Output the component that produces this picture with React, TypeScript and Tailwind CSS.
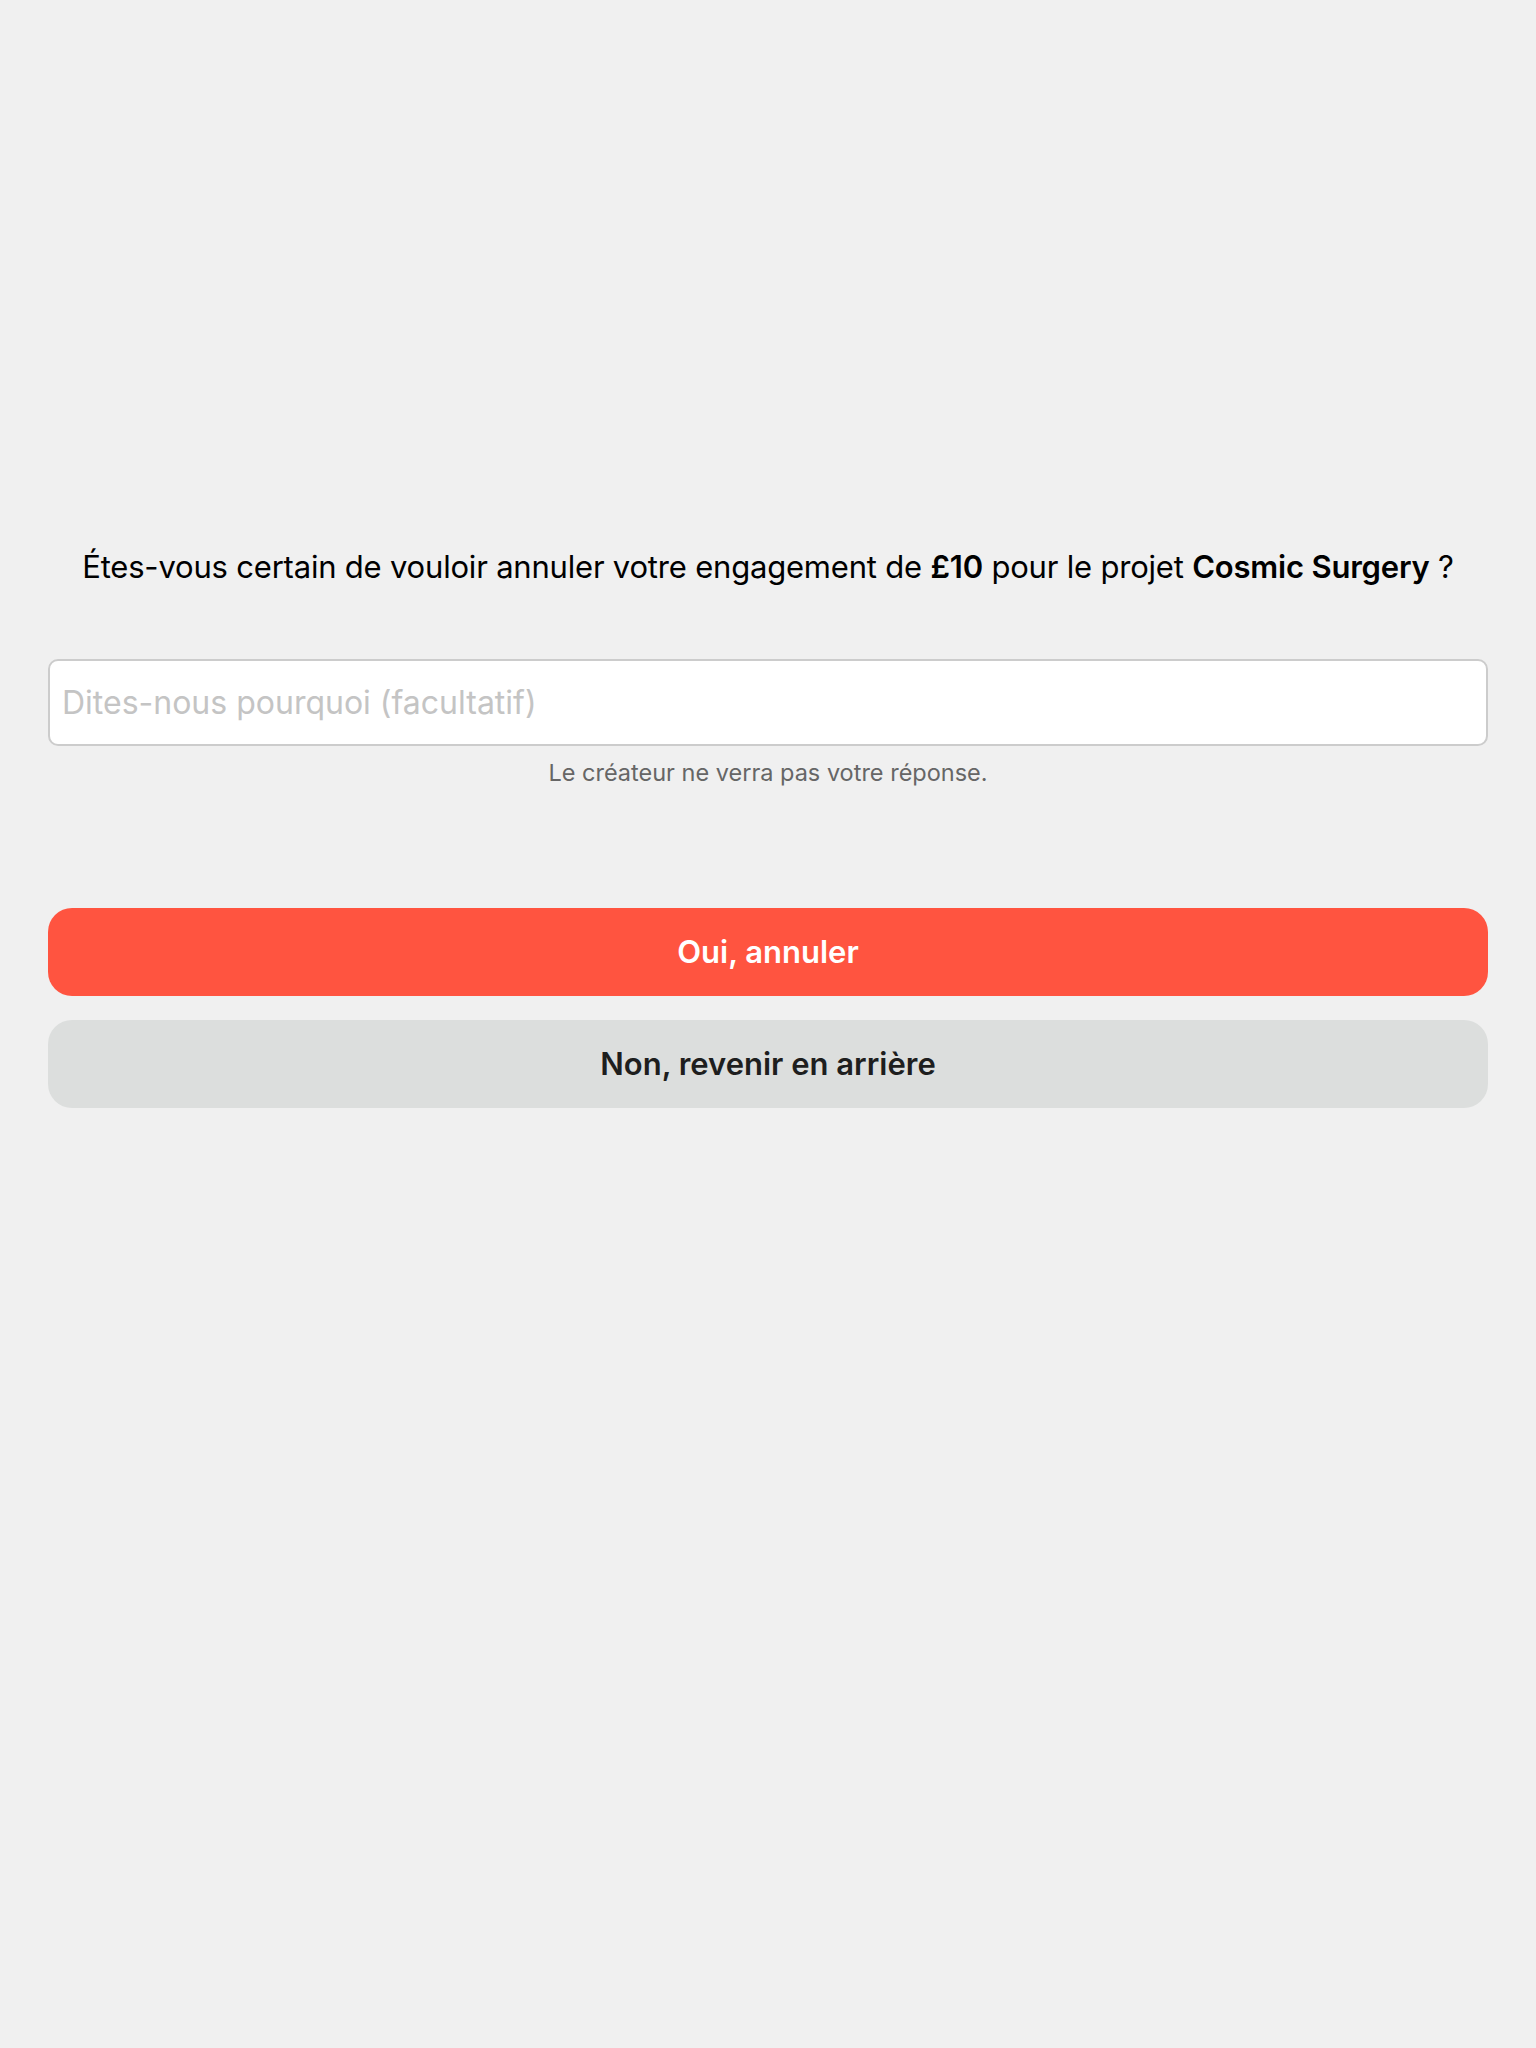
import React, { useState } from 'react';

const App: React.FC = () => {
    const [reason, setReason] = useState('');

    return (
        <div className="min-h-[2048px] bg-[#f0f0f0] font-['Inter','Noto_Sans',sans-serif] text-black">
            <div className="px-[48px] pt-[547px] flex flex-col">
                <p className="text-center text-[31px] leading-[40px] tracking-[-0.2px]">
                    Étes-vous certain de vouloir annuler votre engagement de <span className="font-semibold">£10</span> pour le projet <span className="font-semibold">Cosmic Surgery</span> ?
                </p>

                <input
                    type="text"
                    value={reason}
                    onChange={(e) => setReason(e.target.value)}
                    placeholder="Dites-nous pourquoi (facultatif)"
                    className="mt-[72px] h-[87px] w-full bg-white border-2 border-[#cccccc] rounded-[10px] px-[12px] text-[32px] text-black placeholder:text-[#c4c4c4] focus:outline-none"
                />
                <p className="mt-[13px] text-center text-[23.5px] leading-[28px] text-[#666666]">
                    Le créateur ne verra pas votre réponse.
                </p>

                <div className="mt-[121px] flex flex-col gap-[24px]">
                    <button className="h-[88px] w-full rounded-[24px] bg-[#ff5440] text-white text-[31px] font-semibold">
                        Oui, annuler
                    </button>
                    <button className="h-[88px] w-full rounded-[24px] bg-[#dcdedd] text-[#1e1e1e] text-[31px] font-semibold">
                        Non, revenir en arrière
                    </button>
                </div>
            </div>
        </div>
    );
};

export default App;
